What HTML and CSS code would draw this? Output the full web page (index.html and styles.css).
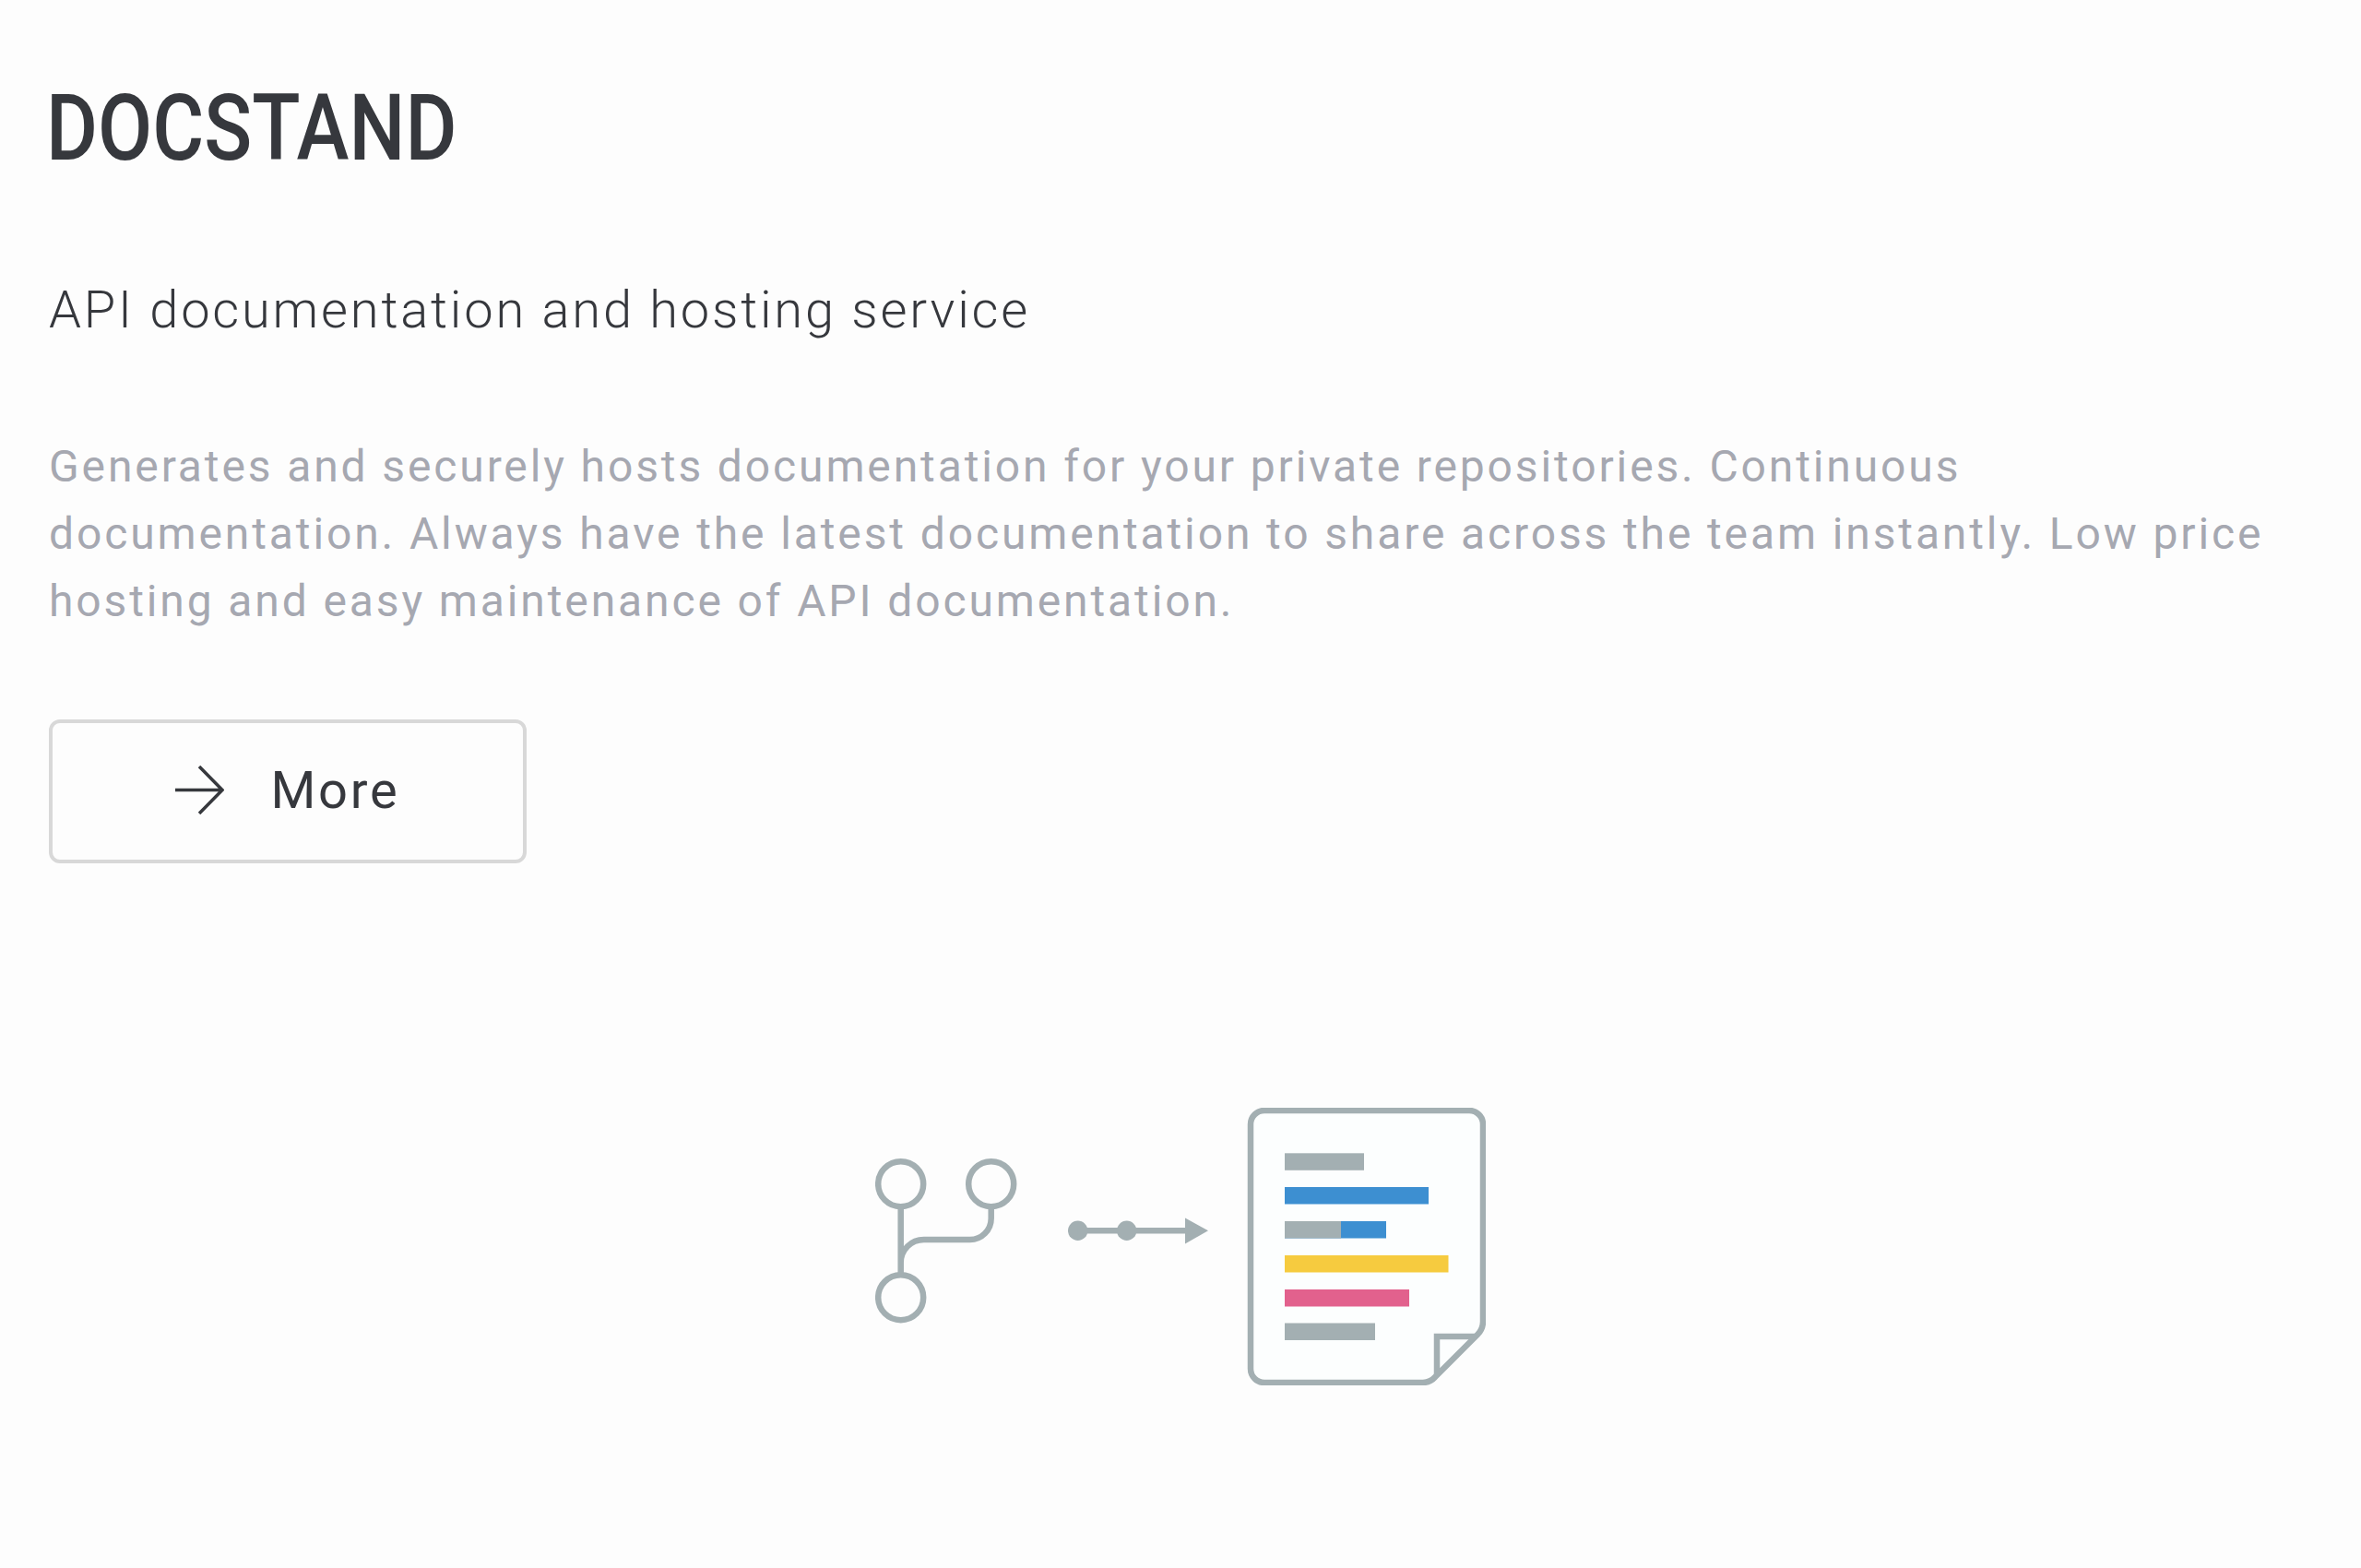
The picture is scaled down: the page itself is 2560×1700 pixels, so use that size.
FILE: index.html
```html
<!DOCTYPE html>
<html lang="en">
<head>
    <meta charset="UTF-8">
    <title>Docstand</title>
    <link rel="stylesheet" href="styles.css">
</head>
<body>
    <section class="product">
        <h1 class="product-name">DOCSTAND</h1>
        <h2 class="product-tagline">API documentation and hosting service</h2>
        <p class="product-text">Generates and securely hosts documentation for your private repositories. Continuous documentation. Always have the latest documentation to share across the team instantly. Low price hosting and easy maintenance of API documentation.</p>
        <a href="#" class="more-button">
            <svg class="more-arrow" width="53" height="53" viewBox="0 0 53 53">
                <path d="M0 26.500H51M26 1L51 26.500L26 52" fill="none" stroke="#36383d" stroke-width="3.500"/>
            </svg>
            <span>More</span>
        </a>
    </section>

    <div class="illustration">
        <svg width="662" height="301" viewBox="0 0 662 301">
            <!-- branch icon -->
            <g fill="none" stroke="#a3afb2" stroke-width="6.500">
                <circle cx="27.700" cy="82.700" r="24.500"/>
                <circle cx="125.700" cy="82.700" r="24.500"/>
                <circle cx="27.700" cy="205.700" r="24.500"/>
                <path d="M27.700 107V181M125.700 107V120a23 23 0 0 1-23 23H52.700a25 25 0 0 0-25 25"/>
            </g>
            <!-- arrow -->
            <g fill="#a3afb2">
                <circle cx="219.700" cy="133.300" r="10.700"/>
                <circle cx="272.700" cy="133.300" r="10.700"/>
                <rect x="219.700" y="130" width="120" height="6.500"/>
                <path d="M336 119.500L361 133.300L336 147.500Z"/>
            </g>
            <!-- document -->
            <path d="M422 3H644a15 15 0 0 1 15 15V232a20 20 0 0 1-6 14L607 292a18 18 0 0 1-13 6H422a15 15 0 0 1-15-15V18a15 15 0 0 1 15-15Z" fill="#fcfefe" stroke="#a3afb2" stroke-width="6.500"/>
            <path d="M609 290V248H650" fill="none" stroke="#a3afb2" stroke-width="6.500"/>
            <rect x="444" y="49.300" width="86" height="18.500" fill="#a3afb2"/>
            <rect x="444" y="86" width="156" height="18.500" fill="#3d8fd1"/>
            <rect x="444" y="123" width="110" height="18.500" fill="#3d8fd1"/>
            <rect x="444" y="123" width="61" height="18.500" fill="#a3afb2"/>
            <rect x="444" y="160" width="177.500" height="18.500" fill="#f6cb3f"/>
            <rect x="444" y="197" width="135" height="18.500" fill="#e2618d"/>
            <rect x="444" y="233.500" width="98" height="18.500" fill="#a3afb2"/>
        </svg>
    </div>
</body>
</html>
```

FILE: styles.css
```css
body {
    margin: 0;
    background-color: #fdfdfd;
    color: #36383d;
    font-family: Roboto, "Liberation Sans", sans-serif;
}
.product {
    padding: 0 53px;
}
.product-name {
    margin: 0 0 0 -3px;
    padding-top: 80px;
    font-size: 101px;
    line-height: 118px;
    font-weight: 500;
    transform: scaleX(0.85);
    transform-origin: left center;
}
.product-tagline {
    margin: 0;
    padding-top: 100px;
    font-size: 56px;
    line-height: 76px;
    font-weight: 300;
    letter-spacing: 2.8px;
}
.product-text {
    margin: 0;
    padding-top: 95px;
    font-size: 48px;
    line-height: 73px;
    color: #a6a8b1;
    letter-spacing: 2.88px;
}
.more-button {
    display: flex;
    align-items: center;
    justify-content: center;
    gap: 50px;
    box-sizing: border-box;
    width: 518px;
    height: 156px;
    margin-top: 92px;
    padding-bottom: 3px;
    border: 4px solid #d8d8d8;
    border-radius: 12px;
    color: #36383d;
    font-size: 56px;
    letter-spacing: 2.8px;
    text-decoration: none;
}
.illustration {
    display: flex;
    justify-content: center;
    margin-top: 265px;
}
```
